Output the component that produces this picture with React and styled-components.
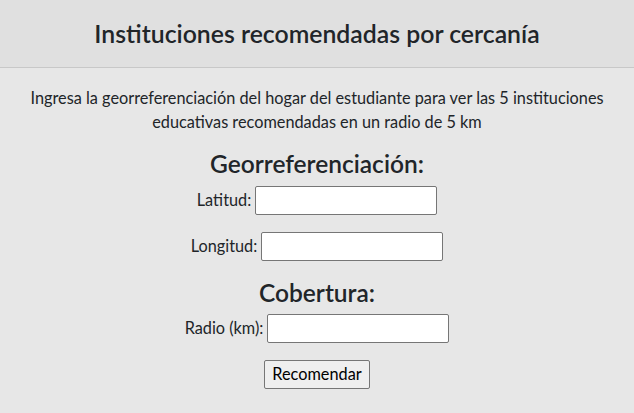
import React, { useState } from "react";
import styled, { createGlobalStyle } from "styled-components";

const GlobalStyle = createGlobalStyle`
  body {
    margin: 0;
    background: #e7e7e7;
    color: #212529;
    font-family: "Segoe UI", Lato, "Noto Sans", sans-serif;
    font-size: 16.3px;
    line-height: 1.5;
  }
`;

const Header = styled.header`
  background: #e0e0e0;
  border-bottom: 1px solid #c8c8c8;
  padding: 19px 0;
  text-align: center;
`;

const Title = styled.h1`
  margin: 0;
  font-size: 24.8px;
  font-weight: 600;
  line-height: 29px;
`;

const Main = styled.main`
  display: flex;
  flex-direction: column;
  align-items: center;
  padding: 18px 28px 0;
  text-align: center;
`;

const Intro = styled.p`
  margin: 0 0 15px;
  line-height: 24px;
`;

const Section = styled.h2`
  margin: 0 0 ${(p) => p.$gap || 8}px;
  font-size: 24.5px;
  font-weight: 600;
  line-height: 29px;
`;

const Field = styled.label`
  display: flex;
  align-items: center;
  gap: 4px;
  margin-bottom: ${(p) => p.$gap || 17}px;
`;

const Input = styled.input`
  width: 182px;
  height: 29px;
  box-sizing: border-box;
  border: 1px solid #767676;
  border-radius: 2px;
  background: #fff;
  font: inherit;
  padding: 1px 2px;
`;

const Button = styled.button`
  font: inherit;
  color: #000;
  background: #efefef;
  border: 1px solid #767676;
  border-radius: 2px;
  padding: 0 7px;
  height: 29px;
`;

const App = () => {
  const [values, setValues] = useState({ lat: "", lon: "", radio: "" });
  const change = (key) => (e) => setValues({ ...values, [key]: e.target.value });

  return (
    <div>
      <GlobalStyle />
      <Header>
        <Title>Instituciones recomendadas por cercanía</Title>
      </Header>
      <Main>
        <Intro>
          Ingresa la georreferenciación del hogar del estudiante para ver las 5 instituciones
          educativas recomendadas en un radio de 5 km
        </Intro>
        <Section>Georreferenciación:</Section>
        <Field>
          Latitud:
          <Input value={values.lat} onChange={change("lat")} />
        </Field>
        <Field $gap={17}>
          Longitud:
          <Input value={values.lon} onChange={change("lon")} />
        </Field>
        <Section $gap={7}>Cobertura:</Section>
        <Field $gap={17}>
          Radio (km):
          <Input value={values.radio} onChange={change("radio")} />
        </Field>
        <Button>Recomendar</Button>
      </Main>
    </div>
  );
};

export default App;
